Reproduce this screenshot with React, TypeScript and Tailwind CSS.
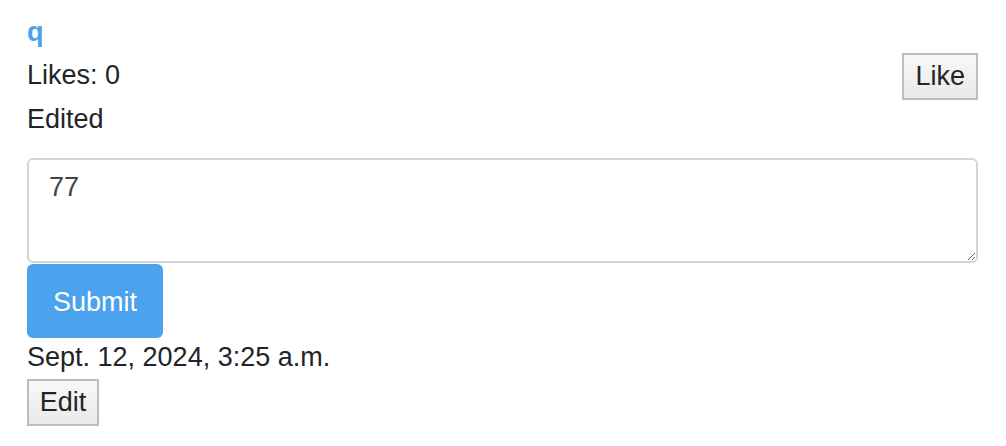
import React from "react";

export default function App() {
  return (
    <div
      className="w-[1006px] h-[446px] bg-white text-[#212529] text-[27px] leading-[31px] overflow-hidden"
      style={{ fontFamily: '"Liberation Sans", Arial, Helvetica, sans-serif' }}
    >
      <div className="pl-[27px] pr-[28px] pt-[17px]">
        <div className="font-bold text-[#4aa3ec]">q</div>
        <div className="mt-[5px] flex items-center justify-between h-[47px]">
          <span className="mt-[-2px]">Likes: 0</span>
          <button className="h-[47px] px-[11px] border-2 border-[#bcbcbc] bg-gradient-to-b from-[#f8f8f8] to-[#e9e9e9] text-[#212529] leading-[31px]">
            Like
          </button>
        </div>
        <div className="mt-[4px]">Edited</div>
        <textarea
          className="block mt-[23px] w-full h-[105px] border-2 border-[#d2d4d7] rounded-[6px] pt-[12px] px-[20px] text-[#3f4449] leading-[31px] outline-none"
          defaultValue="77"
        />
        <button className="block mt-px h-[74px] w-[136px] rounded-[6px] bg-[#4aa3ec] text-white leading-[31px] pt-[2px]">
          Submit
        </button>
        <div className="mt-[4px]">Sept. 12, 2024, 3:25 a.m.</div>
        <button className="block mt-[6px] h-[47px] w-[72px] border-2 border-[#bcbcbc] bg-gradient-to-b from-[#f8f8f8] to-[#e9e9e9] text-[#212529] leading-[31px]">
          Edit
        </button>
      </div>
    </div>
  );
}
